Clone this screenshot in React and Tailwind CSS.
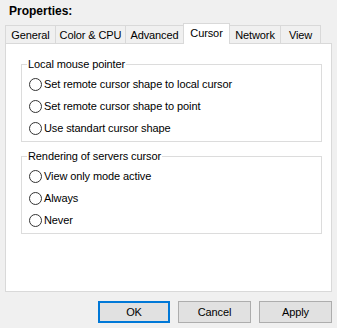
import { useState } from "react";

const tabs = ["General", "Color & CPU", "Advanced", "Cursor", "Network", "View"];
const tabWidths = {
  General: "w-[51px]",
  "Color & CPU": "w-[71px]",
  Advanced: "w-[59px]",
  Cursor: "w-[47px]",
  Network: "w-[52px]",
  View: "w-[41px]",
};

function Radio({ label, checked, onClick }) {
  return (
    <button onClick={onClick} className="flex items-center h-[22px] pl-[7px] text-left whitespace-nowrap">
      <span className="w-[13px] h-[13px] rounded-full border border-[#333333] bg-white flex items-center justify-center">
        {checked && <span className="w-[7px] h-[7px] rounded-full bg-[#333333]" />}
      </span>
      <span className="ml-[2px]">{label}</span>
    </button>
  );
}

function Group({ title, options, value, onChange }) {
  return (
    <fieldset className="border border-[#dcdcdc] w-[301px] pb-[2px]">
      <legend className="ml-[5px] px-[1px] leading-[16px]">{title}</legend>
      <div className="flex flex-col mt-[1px]">
        {options.map((o) => (
          <Radio key={o} label={o} checked={value === o} onClick={() => onChange(o)} />
        ))}
      </div>
    </fieldset>
  );
}

export default function App() {
  const [active, setActive] = useState("Cursor");
  const [pointer, setPointer] = useState(null);
  const [render, setRender] = useState(null);

  return (
    <div
      className="w-[337px] h-[328px] bg-[#f0f0f0] text-[11px] tracking-[-0.1px] text-black overflow-hidden"
      style={{ fontFamily: '"Liberation Sans", Arial, sans-serif' }}
    >
      <div className="pl-[9px] pt-[3px] h-[23px] font-bold text-[12px] tracking-normal leading-[16px]">Properties:</div>

      {/* Tabs */}
      <div className="flex items-end h-[20px] pl-[5px] whitespace-nowrap">
        {tabs.map((t) =>
          t === active ? (
            <button
              key={t}
              onClick={() => setActive(t)}
              className={`${tabWidths[t]} h-[21px] -mb-px -ml-px relative z-10 bg-white border border-b-0 border-[#d9d9d9] leading-[16px] pb-[3px]`}
            >
              {t}
            </button>
          ) : (
            <button
              key={t}
              onClick={() => setActive(t)}
              className={`${tabWidths[t]} h-[18px] bg-[#f0f0f0] border border-b-0 border-[#d9d9d9] -ml-px first:ml-0 leading-[16px]`}
            >
              {t}
            </button>
          )
        )}
      </div>

      {/* Panel */}
      <div className="ml-[5px] w-[327px] h-[249px] bg-white border border-[#d9d9d9] pl-[15px] pt-[12px] flex flex-col gap-[6px]">
        {active === "Cursor" && (
          <>
            <Group
              title="Local mouse pointer"
              options={[
                "Set remote cursor shape to local cursor",
                "Set remote cursor shape to point",
                "Use standart cursor shape",
              ]}
              value={pointer}
              onChange={setPointer}
            />
            <Group
              title="Rendering of servers cursor"
              options={["View only mode active", "Always", "Never"]}
              value={render}
              onChange={setRender}
            />
          </>
        )}
      </div>

      {/* Buttons */}
      <div className="flex justify-end gap-[8px] pr-[5px] pt-[9px]">
        <button className="w-[72px] h-[22px] bg-[#e1e1e1] border-2 border-[#0078d7]">OK</button>
        <button className="w-[73px] h-[22px] bg-[#e1e1e1] border border-[#adadad]">Cancel</button>
        <button className="w-[73px] h-[22px] bg-[#e1e1e1] border border-[#adadad]">Apply</button>
      </div>
    </div>
  );
}
